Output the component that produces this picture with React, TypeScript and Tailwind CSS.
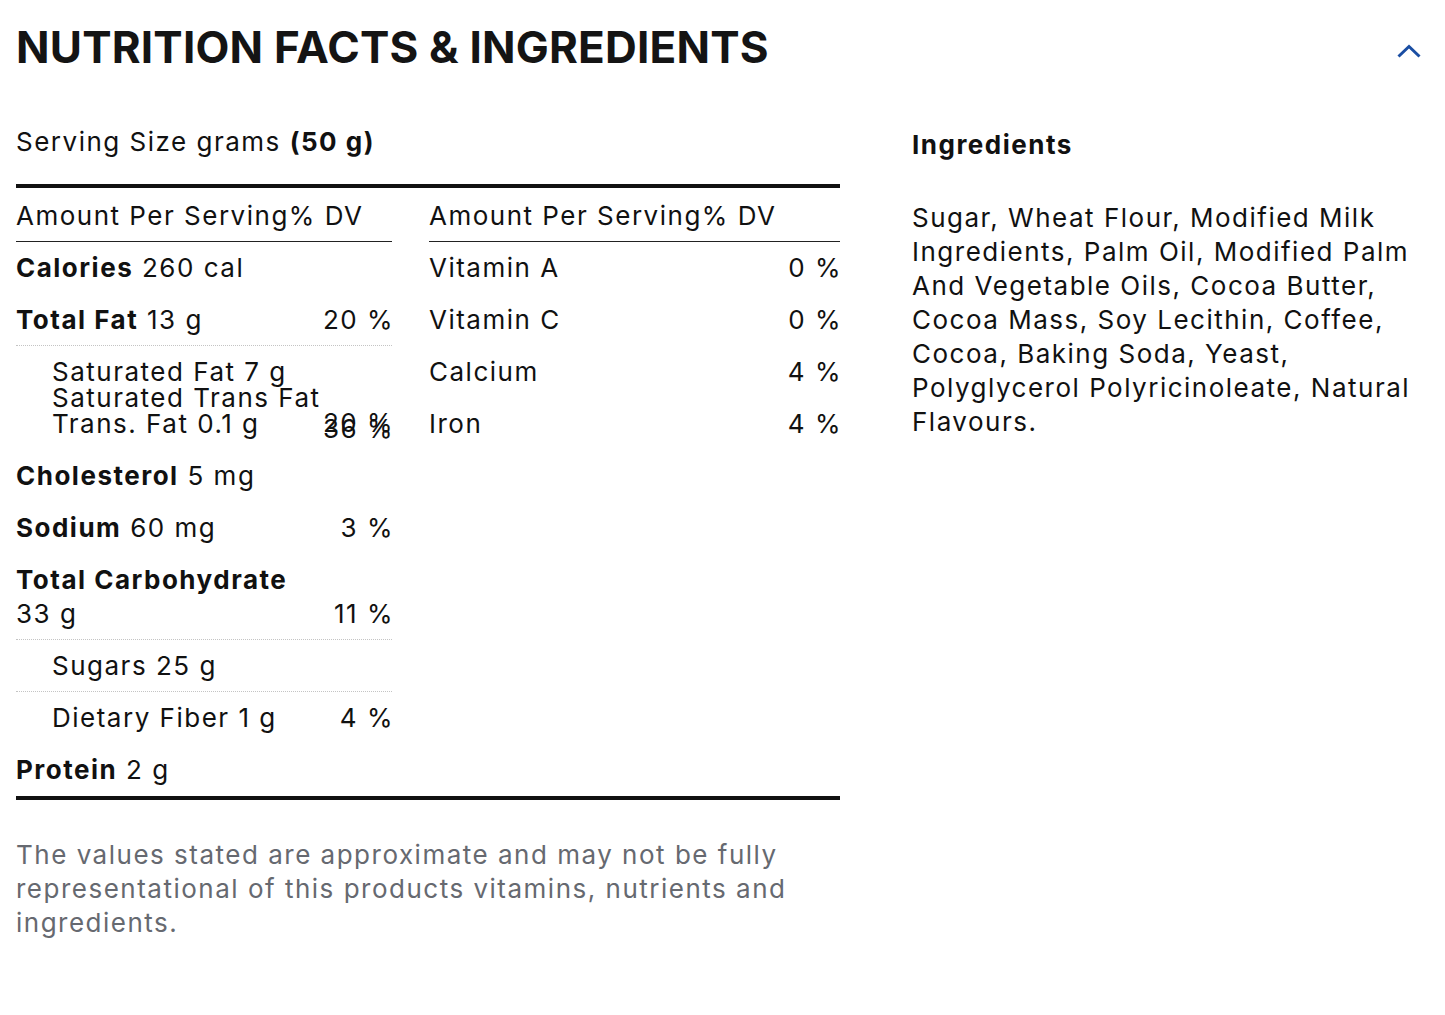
import React from "react";

const font = { fontFamily: "Inter, 'Noto Sans', sans-serif" };

function Row({
  children,
  right,
  border,
  indent,
}: {
  children: React.ReactNode;
  right?: string;
  border?: boolean;
  indent?: boolean;
}) {
  return (
    <div
      className={
        "flex justify-between pt-[9px] " +
        (border ? "pb-[8px] border-b border-dotted border-[#c4c4c4]" : "pb-[9px]") +
        (indent ? " pl-[36px]" : "")
      }
    >
      <div className="leading-[34px]">{children}</div>
      {right && <div className="leading-[34px] whitespace-nowrap -mr-[2px]">{right}</div>}
    </div>
  );
}

export default function App() {
  return (
    <div
      className="w-[1445px] min-h-[1015px] bg-white text-[#111111] px-[16px] text-[26px] tracking-[1.5px]"
      style={font}
    >
      <div className="flex items-center justify-between pt-[21px]">
        <h1 className="text-[44px] font-[750] leading-[52px] tracking-[0.2px] text-[#141414]">
          NUTRITION FACTS &amp; INGREDIENTS
        </h1>
        <svg width="24" height="14" viewBox="0 0 24 14" className="mr-[8px] mt-[8px]">
          <polyline
            points="1.5,12.5 12,2.5 22.5,12.5"
            fill="none"
            stroke="#1a4ea3"
            strokeWidth="3"
          />
        </svg>
      </div>

      <div className="flex gap-[72px] mt-[52px]">
        {/* Left: nutrition table */}
        <div className="w-[824px] shrink-0">
          <div className="leading-[34px]">
            Serving Size grams <span className="font-bold">(50 g)</span>
          </div>
          <div className="mt-[25px] border-t-4 border-[#111111]" />
          <div className="flex gap-[37px]">
            {/* Left column */}
            <div className="w-[376px] shrink-0">
              <div className="pt-[11px] pb-[8px] leading-[34px] border-b border-[#222222]">
                Amount Per Serving% DV
              </div>
              <Row>
                <span className="font-bold">Calories</span> 260 cal
              </Row>
              <Row right="20 %" border>
                <span className="font-bold">Total Fat</span> 13 g
              </Row>
              <div className="h-[104px] flex justify-between pl-[36px] pt-[13px]">
                <div className="leading-[26px]">
                  <div>Saturated Fat 7 g</div>
                  <div>Saturated Trans Fat</div>
                  <div>Trans. Fat 0.1 g</div>
                </div>
                <div className="relative leading-[26px] pt-[51px] whitespace-nowrap -mr-[2px]">
                  <div>20 %</div>
                  <div className="absolute right-0 top-[57px]">36 %</div>
                </div>
              </div>
              <Row>
                <span className="font-bold">Cholesterol</span> 5 mg
              </Row>
              <Row right="3 %">
                <span className="font-bold">Sodium</span> 60 mg
              </Row>
              <div className="flex justify-between items-end pt-[9px] pb-[8px] border-b border-dotted border-[#c4c4c4]">
                <div className="leading-[34px]">
                  <div className="font-bold">Total Carbohydrate</div>
                  <div>33 g</div>
                </div>
                <div className="leading-[34px] -mr-[2px]">11 %</div>
              </div>
              <Row indent border>
                Sugars 25 g
              </Row>
              <Row indent right="4 %">
                Dietary Fiber 1 g
              </Row>
              <Row>
                <span className="font-bold">Protein</span> 2 g
              </Row>
            </div>
            {/* Right column */}
            <div className="w-[411px] shrink-0">
              <div className="pt-[11px] pb-[8px] leading-[34px] border-b border-[#222222]">
                Amount Per Serving% DV
              </div>
              <Row right="0 %">Vitamin A</Row>
              <Row right="0 %">Vitamin C</Row>
              <Row right="4 %">Calcium</Row>
              <Row right="4 %">Iron</Row>
            </div>
          </div>
          <div className="border-t-4 border-[#111111]" />
          <p className="mt-[38px] leading-[34px] text-[#666970] pr-[30px]">
            The values stated are approximate and may not be fully representational of this products
            vitamins, nutrients and ingredients.
          </p>
        </div>

        {/* Right: ingredients */}
        <div className="flex-1 pt-[3px]">
          <div className="font-bold leading-[34px]">Ingredients</div>
          <p className="mt-[39px] leading-[34px]">
            Sugar, Wheat Flour, Modified Milk Ingredients, Palm Oil, Modified Palm And Vegetable Oils,
            Cocoa Butter, Cocoa Mass, Soy Lecithin, Coffee, Cocoa, Baking Soda, Yeast, Polyglycerol
            Polyricinoleate, Natural Flavours.
          </p>
        </div>
      </div>
    </div>
  );
}
